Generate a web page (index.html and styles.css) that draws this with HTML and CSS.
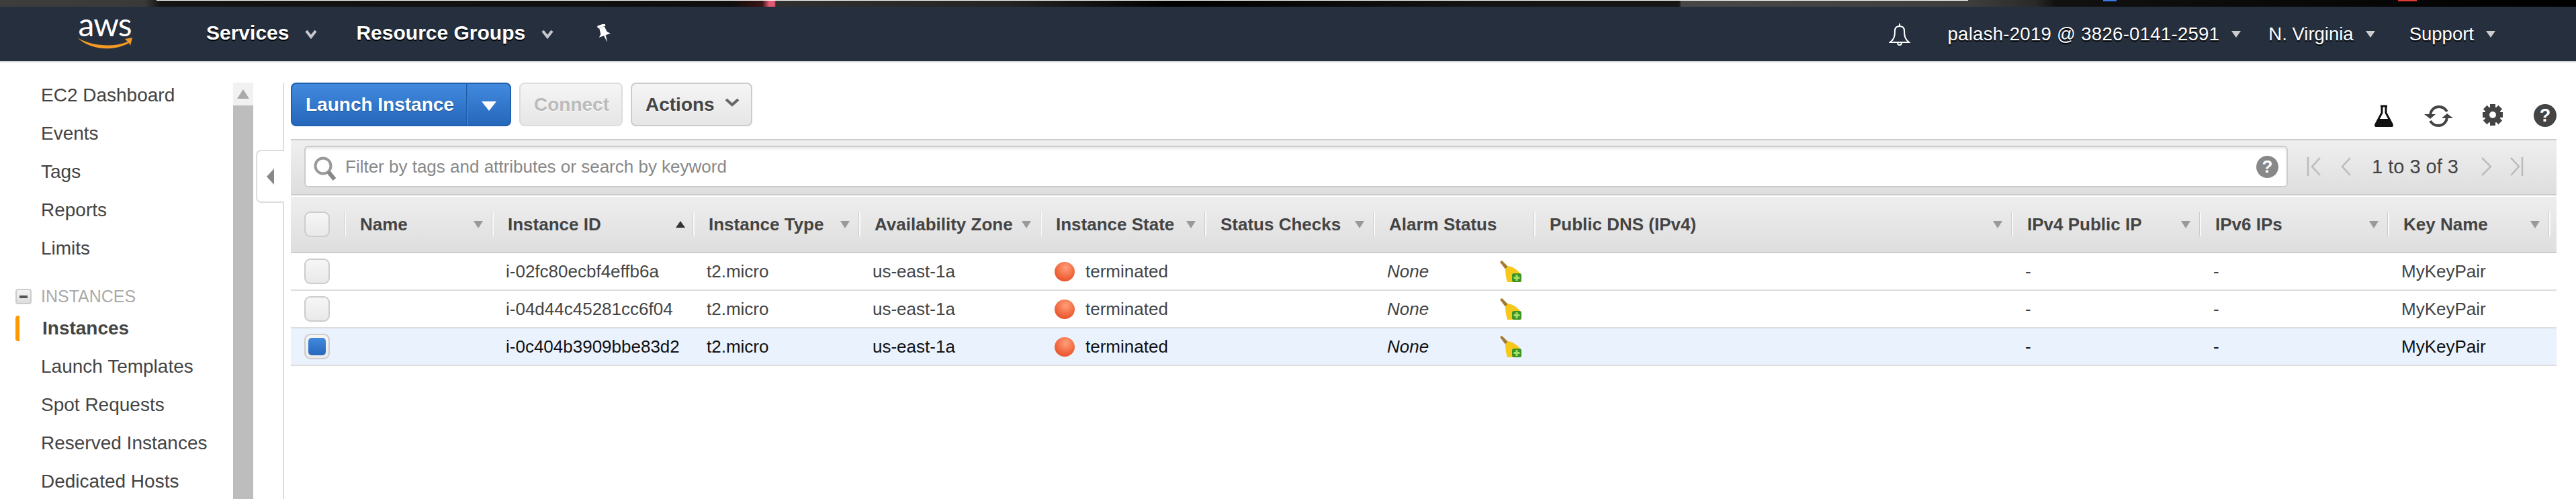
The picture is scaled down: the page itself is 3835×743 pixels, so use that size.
FILE: index.html
```html
<!DOCTYPE html>
<html lang="en">
  <head>
    <meta charset="UTF-8" />
    <meta name="viewport" content="width=device-width, initial-scale=1.0" />
    <title>EC2 Management Console</title>
    <link rel="stylesheet" href="styles.css">
  </head>

  <body>
    <div class="strip"></div>

    <header class="nav">
      <a class="logo">
        <span class="logo-text">aws</span>
        <svg class="logo-smile" viewBox="0 0 82 18">
          <path d="M0 0C22 13 54 15 75 6L71 2 82 0 79 12 77 8C54 21 20 19 0 0Z" fill="#f29a24" />
        </svg>
      </a>
      <a class="nav-main services">Services</a>
      <svg class="nav-chev" viewBox="0 0 18 14"><path d="M2 2l7 9 7-9" fill="none" stroke="#c4c8cd" stroke-width="4" /></svg>
      <a class="nav-main groups">Resource Groups</a>
      <svg class="nav-chev" viewBox="0 0 18 14"><path d="M2 2l7 9 7-9" fill="none" stroke="#c4c8cd" stroke-width="4" /></svg>
      <svg class="nav-pin" viewBox="0 0 26 27">
        <g transform="rotate(-20 13 13)" fill="#fff">
          <rect x="7" y="0" width="12" height="4" rx="1" />
          <path d="M9 4h8l1 9 4 4H4l4-4z" />
          <path d="M11.500 17h3L13 28z" />
        </g>
      </svg>

      <div class="nav-right">
        <svg class="nav-bell" viewBox="0 0 32 34">
          <path d="M16 1v4M9 12c0-5 3-7 7-7s7 2 7 7c0 8 1 12 7 17H2c6-5 7-9 7-17zM13 29c0 3 1 4 3 4s3-1 3-4" fill="none" stroke="#fff" stroke-width="2" />
        </svg>
        <a class="nav-user">palash-2019 @ 3826-0141-2591</a>
        <span class="nav-caret"></span>
        <a class="nav-region">N. Virginia</a>
        <span class="nav-caret"></span>
        <a class="nav-support">Support</a>
        <span class="nav-caret"></span>
      </div>
    </header>

    <div class="page">
      <aside class="side">
        <ul class="side-list">
          <li class="item">EC2 Dashboard</li>
          <li class="item">Events</li>
          <li class="item">Tags</li>
          <li class="item">Reports</li>
          <li class="item">Limits</li>
          <li class="group-head"><span class="group-box"></span>INSTANCES</li>
          <li class="item active">Instances</li>
          <li class="item">Launch Templates</li>
          <li class="item">Spot Requests</li>
          <li class="item">Reserved Instances</li>
          <li class="item">Dedicated Hosts</li>
        </ul>
        <div class="scroll">
          <div class="scroll-btn"><span class="scroll-arrow"></span></div>
          <div class="scroll-thumb"></div>
        </div>
      </aside>

      <main class="main">
        <div class="side-toggle"><span class="toggle-arrow"></span></div>

        <div class="toolbar">
          <div class="btn-launch">
            <span class="launch-label">Launch Instance</span>
            <span class="launch-drop"><span class="drop-arrow"></span></span>
          </div>
          <div class="btn btn-connect">Connect</div>
          <div class="btn btn-actions">
            Actions
            <svg class="actions-chev" viewBox="0 0 22 13"><path d="M2 2l9 8 9-8" fill="none" stroke="#666" stroke-width="4" /></svg>
          </div>

          <div class="tools">
            <svg class="tool-flask" viewBox="0 0 30 33">
              <path d="M10 2h10M12 2v10L3 29c-1 2 0 3 2 3h20c2 0 3-1 2-3L18 12V2" fill="none" stroke="#111" stroke-width="3" />
              <path d="M8 21h14l6 11H2z" fill="#111" />
            </svg>
            <svg class="tool-refresh" viewBox="0 0 43 34">
              <path d="M9 17C9 8 15 3 22 3c5 0 9 2 12 7" fill="none" stroke="#444" stroke-width="4" />
              <path d="M34 17c0 9-6 14-13 14-5 0-9-2-12-7" fill="none" stroke="#444" stroke-width="4" />
              <path d="M0 14l9 7 8-7zM26 20l8-7 9 7z" fill="#444" />
            </svg>
            <svg class="tool-gear" viewBox="0 0 30 32">
              <g fill="#444">
                <rect x="11" y="0" width="8" height="32" />
                <rect x="11" y="0" width="8" height="32" transform="rotate(45 15 16)" />
                <rect x="11" y="0" width="8" height="32" transform="rotate(90 15 16)" />
                <rect x="11" y="0" width="8" height="32" transform="rotate(135 15 16)" />
                <circle cx="15" cy="16" r="12" />
              </g>
              <circle cx="15" cy="16" r="5" fill="#fff" />
            </svg>
            <span class="help help-dark">?</span>
          </div>
        </div>

        <div class="filter-bar">
          <div class="search">
            <svg class="search-icon" viewBox="0 0 36 38">
              <circle cx="15" cy="15" r="11.5" fill="none" stroke="#999" stroke-width="4" />
              <path d="M23 24l9 11" stroke="#888" stroke-width="6" />
            </svg>
            <span class="search-text">Filter by tags and attributes or search by keyword</span>
            <span class="help help-grey">?</span>
          </div>
          <div class="pager">
            <svg class="pg-first" viewBox="0 0 22 28"><path d="M2 0v28M20 1L8 14l12 13" fill="none" stroke="#bbb" stroke-width="2.5" /></svg>
            <svg class="pg-prev" viewBox="0 0 15 28"><path d="M14 1L2 14l12 13" fill="none" stroke="#bbb" stroke-width="2.5" /></svg>
            <span class="pg-text">1 to 3 of 3</span>
            <svg class="pg-next" viewBox="0 0 17 28"><path d="M2 1l13 13L2 27" fill="none" stroke="#bbb" stroke-width="2.5" /></svg>
            <svg class="pg-last" viewBox="0 0 21 28"><path d="M2 1l12 13L2 27M19 0v28" fill="none" stroke="#bbb" stroke-width="2.5" /></svg>
          </div>
        </div>

        <div class="table">
          <div class="row head">
            <div class="th-check"><span class="check"></span></div>
            <div class="th">Name<span class="sort"></span></div>
            <div class="th">Instance ID<span class="sort up"></span></div>
            <div class="th">Instance Type<span class="sort"></span></div>
            <div class="th">Availability Zone<span class="sort"></span></div>
            <div class="th">Instance State<span class="sort"></span></div>
            <div class="th">Status Checks<span class="sort"></span></div>
            <div class="th">Alarm Status</div>
            <div class="th">Public DNS (IPv4)<span class="sort"></span></div>
            <div class="th">IPv4 Public IP<span class="sort"></span></div>
            <div class="th">IPv6 IPs<span class="sort"></span></div>
            <div class="th">Key Name<span class="sort"></span></div>
            <div class="th"></div>
          </div>

          <div class="row body">
            <div class="td-check"><span class="check"></span></div>
            <div class="td"></div>
            <div class="td">i-02fc80ecbf4effb6a</div>
            <div class="td">t2.micro</div>
            <div class="td">us-east-1a</div>
            <div class="td"><span class="dot"></span>terminated</div>
            <div class="td"></div>
            <div class="td alarm"><em>None</em>
              <svg class="broom" viewBox="0 0 32 32">
                <path d="M0 2l3-2 10 10-4 4z" fill="#a57a2e" />
                <path d="M8 12l5-4c8 2 15 7 19 14v10H11C9 26 8 19 8 12z" fill="#f7c81c" />
                <rect x="18" y="19" width="14" height="13" rx="3" fill="#3a9426" />
                <path d="M25 21v9M20.500 25.500h9" stroke="#a4e066" stroke-width="3" />
              </svg>
            </div>
            <div class="td"></div>
            <div class="td">-</div>
            <div class="td">-</div>
            <div class="td">MyKeyPair</div>
            <div class="td"></div>
          </div>

          <div class="row body">
            <div class="td-check"><span class="check"></span></div>
            <div class="td"></div>
            <div class="td">i-04d44c45281cc6f04</div>
            <div class="td">t2.micro</div>
            <div class="td">us-east-1a</div>
            <div class="td"><span class="dot"></span>terminated</div>
            <div class="td"></div>
            <div class="td alarm"><em>None</em>
              <svg class="broom" viewBox="0 0 32 32">
                <path d="M0 2l3-2 10 10-4 4z" fill="#a57a2e" />
                <path d="M8 12l5-4c8 2 15 7 19 14v10H11C9 26 8 19 8 12z" fill="#f7c81c" />
                <rect x="18" y="19" width="14" height="13" rx="3" fill="#3a9426" />
                <path d="M25 21v9M20.500 25.500h9" stroke="#a4e066" stroke-width="3" />
              </svg>
            </div>
            <div class="td"></div>
            <div class="td">-</div>
            <div class="td">-</div>
            <div class="td">MyKeyPair</div>
            <div class="td"></div>
          </div>

          <div class="row body selected">
            <div class="td-check"><span class="check checked"></span></div>
            <div class="td"></div>
            <div class="td">i-0c404b3909bbe83d2</div>
            <div class="td">t2.micro</div>
            <div class="td">us-east-1a</div>
            <div class="td"><span class="dot"></span>terminated</div>
            <div class="td"></div>
            <div class="td alarm"><em>None</em>
              <svg class="broom" viewBox="0 0 32 32">
                <path d="M0 2l3-2 10 10-4 4z" fill="#a57a2e" />
                <path d="M8 12l5-4c8 2 15 7 19 14v10H11C9 26 8 19 8 12z" fill="#f7c81c" />
                <rect x="18" y="19" width="14" height="13" rx="3" fill="#3a9426" />
                <path d="M25 21v9M20.500 25.500h9" stroke="#a4e066" stroke-width="3" />
              </svg>
            </div>
            <div class="td"></div>
            <div class="td">-</div>
            <div class="td">-</div>
            <div class="td">MyKeyPair</div>
            <div class="td"></div>
          </div>
        </div>
      </main>
    </div>
  </body>
</html>
```

FILE: styles.css
```css
* {
  margin: 0;
  padding: 0;
  box-sizing: border-box;
  font-family: 'Liberation Sans', Arial, sans-serif;
}

html,
body {
  height: 743px;
  overflow: hidden;
  background: #fff;
}

ul {
  list-style: none;
}

/* top sliver of whatever was above the console */
.strip {
  height: 10px;
  background:
    linear-gradient(90deg, transparent 233px, #fff 233px, #fff 2930px, transparent 2930px) top / 100% 1px no-repeat,
    linear-gradient(90deg, transparent 3131px, #3b78e7 3131px, #3b78e7 3151px, transparent 3151px, transparent 3570px, #e53935 3570px, #e53935 3598px, transparent 3598px) top / 100% 2px no-repeat,
    linear-gradient(90deg, #3d3d3d 0, #3a3a3a 215px, #141414 240px, #0e0e0c 1090px, #3a1414 1135px, #e05a70 1145px, #e05a70 1153px, #303030 1155px, #242424 1500px, #000 1745px, #141414 2200px, #161616 2500px, #484848 2503px, #3e3e3e 2930px, #2a2a2a 3030px, #111 3060px, #000 3835px);
}

.nav {
  height: 83px;
  display: flex;
  align-items: center;
  background: #252f3e;
  border-bottom: 2px solid #d5d5d5;
  color: #fff;
}

.logo {
  width: 82px;
  margin-left: 115px;
  display: flex;
  flex-direction: column;
  align-items: center;
}

.logo-text {
  font-family: Lato, sans-serif;
  font-size: 48px;
  line-height: 32px;
  letter-spacing: -1px;
  height: 34px;
  margin-top: -8px;
}

.logo-smile {
  width: 82px;
  height: 18px;
  margin-top: 2px;
}

.nav-main {
  font-size: 30px;
  font-weight: 700;
  text-shadow: 0 2px 1px #000;
  margin-top: -3px;
}

.services {
  margin-left: 110px;
}

.groups {
  margin-left: 58px;
}

.nav-chev {
  width: 18px;
  height: 14px;
  margin-left: 24px;
}

.nav-pin {
  width: 26px;
  height: 27px;
  margin-left: 62px;
  margin-top: -3px;
}

.nav-right {
  margin-left: auto;
  display: flex;
  align-items: center;
  padding-right: 120px;
  font-size: 27.5px;
  text-shadow: 0 2px 1px #000;
}

.nav-bell {
  width: 32px;
  height: 34px;
  margin-right: 55px;
}

.nav-user {
  letter-spacing: 0.3px;
}

.nav-caret {
  width: 0;
  height: 0;
  margin-left: 18px;
  border-left: 7px solid transparent;
  border-right: 7px solid transparent;
  border-top: 10px solid #ccc;
}

.nav-region {
  margin-left: 41px;
}

.nav-support {
  margin-left: 51px;
}

.page {
  display: flex;
  padding-top: 30px;
  padding-right: 29px;
}

.side {
  width: 423px;
  height: 640px;
  display: flex;
  flex-shrink: 0;
  border-right: 2px solid #ddd;
  padding-right: 44px;
}

.side-list {
  width: 347px;
  font-size: 28px;
  color: #444;
}

.item {
  height: 38px;
  line-height: 38px;
  margin-bottom: 19px;
  padding-left: 61px;
}

.item.active {
  font-weight: 700;
  border-left: 6px solid #f90;
  border-radius: 4px;
  margin-left: 23px;
  padding-left: 34px;
}

.group-head {
  height: 38px;
  line-height: 38px;
  margin: 33px 0 10px;
  padding-left: 23px;
  display: flex;
  align-items: center;
  font-size: 25px;
  color: #aaa;
}

.group-box {
  width: 24px;
  height: 23px;
  margin-right: 14px;
  border: 2px solid #ccc;
  border-radius: 4px;
  background: linear-gradient(#f4f4f4, #ddd);
  position: relative;
}

.group-box::after {
  content: '';
  position: absolute;
  left: 4px;
  top: 8px;
  width: 12px;
  height: 4px;
  background: #555;
}

.scroll {
  width: 30px;
  flex-shrink: 0;
}

.scroll-btn {
  height: 34px;
  background: #f1f1f1;
  display: flex;
  align-items: center;
  justify-content: center;
}

.scroll-arrow {
  width: 0;
  height: 0;
  border-left: 9px solid transparent;
  border-right: 9px solid transparent;
  border-bottom: 14px solid #aaa;
}

.scroll-thumb {
  height: 620px;
  background: #bdbdbd;
}

.main {
  flex: 1;
  margin-left: 10px;
  position: relative;
}

.side-toggle {
  position: absolute;
  left: -52px;
  top: 100px;
  width: 42px;
  height: 79px;
  background: #fff;
  border: 2px solid #ddd;
  border-right: 0;
  border-radius: 8px 0 0 8px;
  display: flex;
  align-items: center;
  padding-left: 14px;
}

.toggle-arrow {
  width: 0;
  height: 0;
  border-top: 12px solid transparent;
  border-bottom: 12px solid transparent;
  border-right: 11px solid #888;
}

.toolbar {
  height: 84px;
  display: flex;
  align-items: flex-start;
}

.btn-launch {
  width: 328px;
  height: 65px;
  display: flex;
  border: 2px solid #1f5fae;
  border-radius: 8px;
  background: linear-gradient(#428ade, #2567bb);
  color: #fff;
  font-size: 28px;
  font-weight: 700;
  text-shadow: 0 1px 1px #1c4f90;
}

.launch-label {
  width: 261px;
  line-height: 61px;
  padding-left: 20px;
  border-right: 2px solid #1f5fae;
  box-shadow: 1px 0 #5b9ae4;
}

.launch-drop {
  flex: 1;
  display: flex;
  align-items: center;
  justify-content: center;
}

.drop-arrow {
  width: 0;
  height: 0;
  margin-top: 4px;
  border-left: 11px solid transparent;
  border-right: 11px solid transparent;
  border-top: 14px solid #fff;
}

.btn {
  height: 65px;
  line-height: 61px;
  border: 2px solid #ccc;
  border-radius: 8px;
  background: linear-gradient(#f5f5f5, #e6e6e6);
  font-size: 28px;
  font-weight: 700;
  color: #444;
  text-shadow: 0 1px 0 #fff;
}

.btn-connect {
  width: 154px;
  margin-left: 12px;
  padding-left: 20px;
  color: #bbb;
  border-color: #ddd;
}

.btn-actions {
  width: 181px;
  margin-left: 12px;
  padding-left: 20px;
  display: flex;
  align-items: center;
}

.actions-chev {
  width: 22px;
  height: 13px;
  margin-left: 15px;
  margin-top: -6px;
}

.tools {
  margin-left: auto;
  padding-top: 32px;
  display: flex;
  align-items: flex-start;
  height: 84px;
}

.tool-flask {
  width: 30px;
  height: 33px;
  margin-top: 1px;
}

.tool-refresh {
  width: 43px;
  height: 34px;
  margin-left: 45px;
  margin-top: 1px;
}

.tool-gear {
  width: 30px;
  height: 32px;
  margin-left: 44px;
}

.help {
  border-radius: 50%;
  color: #fff;
  font-weight: 700;
  text-align: center;
  flex-shrink: 0;
}

.help-dark {
  width: 34px;
  height: 34px;
  line-height: 34px;
  margin-left: 46px;
  background: #444;
  font-size: 27px;
}

.help-grey {
  width: 33px;
  height: 33px;
  line-height: 33px;
  margin-left: auto;
  margin-right: 12px;
  background: #888;
  font-size: 26px;
}

.filter-bar {
  height: 84px;
  display: flex;
  padding: 8px 0 0 20px;
  border-top: 2px solid #ccc;
  border-bottom: 2px solid #ccc;
  background: linear-gradient(#efefef, #dedede);
}

.search {
  flex: 1;
  height: 62px;
  display: flex;
  align-items: center;
  padding-left: 11px;
  background: #fff;
  border: 2px solid #ccc;
  border-radius: 6px;
  box-shadow: inset 0 4px 4px -2px #e4e4e4;
}

.search-icon {
  width: 36px;
  height: 38px;
  margin-top: 6px;
}

.search-text {
  margin-left: 12px;
  font-size: 26px;
  color: #888;
}

.pager {
  width: 400px;
  flex-shrink: 0;
  height: 62px;
  display: flex;
  align-items: center;
  padding-left: 28px;
}

.pg-first {
  width: 22px;
  height: 28px;
}

.pg-prev {
  width: 15px;
  height: 28px;
  margin-left: 29px;
}

.pg-text {
  margin-left: 31px;
  font-size: 29px;
  color: #444;
}

.pg-next {
  width: 17px;
  height: 28px;
  margin-left: 33px;
}

.pg-last {
  width: 21px;
  height: 28px;
  margin-left: 26px;
}

.table {
  margin-top: 2px;
}

.row {
  display: grid;
  grid-template-columns: 80px 220px 299px 247px 270px 245px 251px 239px 711px 280px 280px 240px 11px;
}

.head {
  height: 84px;
  align-items: center;
  border-bottom: 2px solid #ccc;
  background: linear-gradient(#eeeeee, #dedede);
  font-size: 26px;
  font-weight: 700;
  color: #444;
}

.th-check,
.td-check {
  padding-left: 20px;
  display: flex;
  align-items: center;
}

.th {
  height: 36px;
  display: flex;
  align-items: center;
  padding-left: 21px;
  padding-right: 14px;
  border-left: 2px solid #f9f9f9;
  box-shadow: -1px 0 #ccc;
  white-space: nowrap;
}

.sort {
  margin-left: auto;
  width: 0;
  height: 0;
  border-left: 7px solid transparent;
  border-right: 7px solid transparent;
  border-top: 11px solid #999;
}

.sort.up {
  border-top: 0;
  border-bottom: 10px solid #333;
  margin-right: -2px;
}

.check {
  width: 38px;
  height: 38px;
  display: flex;
  align-items: center;
  justify-content: center;
  border: 2px solid #ccc;
  border-radius: 9px;
  background: linear-gradient(#f6f6f6, #e9e9e9);
}

.check.checked::after {
  content: '';
  width: 26px;
  height: 26px;
  border-radius: 5px;
  background: linear-gradient(#428ade, #2567bb);
}

.body {
  height: 56px;
  align-items: center;
  border-bottom: 2px solid #ddd;
  font-size: 26px;
  color: #444;
}

.selected {
  background: #eaf2fd;
  color: #111;
}

.td {
  padding-left: 20px;
  display: flex;
  align-items: center;
  white-space: nowrap;
}

.td-check {
  height: 54px;
}

.dot {
  width: 30px;
  height: 29px;
  margin-right: 16px;
  margin-left: 1px;
  border-radius: 50%;
  background: radial-gradient(circle at 55% 30%, #ff9f7a, #f0633a 60%, #d8431d);
}

.alarm em {
  width: 168px;
  font-style: italic;
}

.broom {
  width: 32px;
  height: 32px;
}
```
